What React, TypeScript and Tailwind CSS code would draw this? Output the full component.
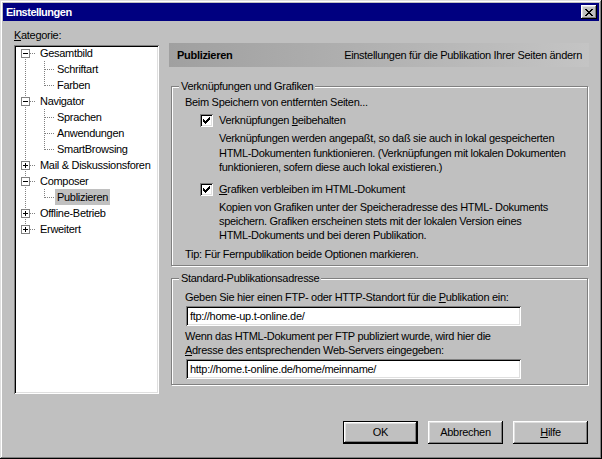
import React from "react";

const FONT = "font-['Liberation_Sans',Arial,sans-serif]";

// classic win98 bevels
const RAISED = "shadow-[inset_-1px_-1px_#000,inset_1px_1px_#fff,inset_-2px_-2px_#808080,inset_2px_2px_#dfdfdf]";
const SUNKEN = "shadow-[inset_1px_1px_#808080,inset_-1px_-1px_#fff,inset_2px_2px_#000,inset_-2px_-2px_#dfdfdf]";
const ETCHED = "border border-[#808080] shadow-[inset_1px_1px_#fff,1px_1px_#fff]";

type Node = { label: string; level: 0 | 1; box?: "plus" | "minus"; last?: boolean; selected?: boolean };

const TREE: Node[] = [
  { label: "Gesamtbild", level: 0, box: "minus" },
  { label: "Schriftart", level: 1 },
  { label: "Farben", level: 1, last: true },
  { label: "Navigator", level: 0, box: "minus" },
  { label: "Sprachen", level: 1 },
  { label: "Anwendungen", level: 1 },
  { label: "SmartBrowsing", level: 1, last: true },
  { label: "Mail & Diskussionsforen", level: 0, box: "plus" },
  { label: "Composer", level: 0, box: "minus" },
  { label: "Publizieren", level: 1, last: true, selected: true },
  { label: "Offline-Betrieb", level: 0, box: "plus" },
  { label: "Erweitert", level: 0, box: "plus", last: true },
];

function Gutter({ node, first }: { node: Node; first: boolean }) {
  const w = node.level === 0 ? 22 : 39;
  const dot = { stroke: "#808080", strokeDasharray: "1 1", shapeRendering: "crispEdges" as const };
  return (
    <svg width={w} height={16} className="shrink-0">
      {node.level === 0 ? (
        <>
          <line x1={9.5} x2={9.5} y1={first ? 8 : 0} y2={node.last ? 4 : 16} {...dot} />
          <line x1={14} x2={20} y1={8.5} y2={8.5} {...dot} />
          <rect x={5.5} y={4.5} width={8} height={8} fill="#fff" stroke="#808080" shapeRendering="crispEdges" />
          <line x1={7} x2={12} y1={8.5} y2={8.5} stroke="#000" shapeRendering="crispEdges" />
          {node.box === "plus" && <line x1={9.5} x2={9.5} y1={6} y2={11} stroke="#000" shapeRendering="crispEdges" />}
        </>
      ) : (
        <>
          <line x1={9.5} x2={9.5} y1={0} y2={16} {...dot} />
          <line x1={28.5} x2={28.5} y1={0} y2={node.last ? 9 : 16} {...dot} />
          <line x1={29} x2={38} y1={8.5} y2={8.5} {...dot} />
        </>
      )}
    </svg>
  );
}

function Check() {
  return (
    <span className={`w-[13px] h-[13px] bg-white shrink-0 flex items-center justify-center ${SUNKEN}`}>
      <svg width={7} height={7} viewBox="0 0 7 7">
        <path d="M0 2h1v1h1v1h1v-1h1v-1h1v-1h1v-1h1v3h-1v1h-1v1h-1v1h-1v1h-1v-1h-1v-1h-1v-1h-1z" fill="#000" />
      </svg>
    </span>
  );
}

function Button({ children, def }: { children: React.ReactNode; def?: boolean }) {
  return (
    <div
      className={`w-[75px] h-[23px] flex items-center justify-center text-black ${
        def
          ? "shadow-[inset_0_0_0_1px_#000,inset_-2px_-2px_#000,inset_2px_2px_#fff,inset_-3px_-3px_#808080,inset_3px_3px_#dfdfdf]"
          : RAISED
      }`}
    >
      {children}
    </div>
  );
}

export default function App() {
  return (
    <div className={`w-[602px] h-[459px] bg-[#c0c0c0] p-[3px] flex flex-col text-[11px] tracking-[-0.3px] leading-[13px] text-black ${FONT} shadow-[inset_-1px_-1px_#000,inset_1px_1px_#dfdfdf,inset_-2px_-2px_#808080,inset_2px_2px_#fff]`}>
      {/* title bar */}
      <div className="h-[18px] bg-[#000080] flex items-center justify-between pl-[3px] pr-[2px]">
        <span className="text-white font-bold text-[11px] tracking-[-0.5px]">Einstellungen</span>
        <div className={`w-[16px] h-[14px] bg-[#c0c0c0] flex items-center justify-center ${RAISED}`}>
          <svg width={8} height={7} viewBox="0 0 8 7">
            <path d="M0 0h2v1h1v1h2v-1h1v-1h2v1h-1v1h-1v1h-1v1h1v1h1v1h1v1h-2v-1h-1v-1h-2v1h-1v1h-2v-1h1v-1h1v-1h1v-1h-1v-1h-1v-1h-1z" fill="#000" />
          </svg>
        </div>
      </div>

      <div className="flex flex-1">
        {/* left: categories */}
        <div className="ml-[11px] mt-[8px] flex flex-col">
          <span>
            <u>K</u>ategorie:
          </span>
          <div className={`mt-[3px] w-[145px] h-[349px] bg-white px-[2px] ${SUNKEN}`}>
            <div className="flex flex-col">
              {TREE.map((n, i) => (
                <div key={n.label} className="h-[16px] flex items-center whitespace-nowrap">
                  <Gutter node={n} first={i === 0} />
                  <span className={`px-[2px] h-[16px] flex items-center ${n.selected ? "bg-[#c0c0c0]" : ""}`}>{n.label}</span>
                </div>
              ))}
            </div>
          </div>
        </div>

        {/* right: panel */}
        <div className="ml-[10px] mt-[22px] w-[420px] flex flex-col">
          <div className="h-[24px] bg-linear-to-r from-[#a0a0a0] to-[#c4c4c4] flex items-center justify-between pl-[8px] pr-[7px]">
            <span className="font-bold">Publizieren</span>
            <span>Einstellungen für die Publikation Ihrer Seiten ändern</span>
          </div>

          {/* group 1 */}
          <div className={`relative ml-[2px] mt-[19px] w-[417px] h-[180px] ${ETCHED}`}>
            <span className="absolute -top-[7px] left-[7px] bg-[#c0c0c0] px-[2px]">Verknüpfungen und Grafiken</span>
            <div className="pl-[13px] pt-[9px] flex flex-col">
              <span>Beim Speichern von entfernten Seiten...</span>
              <div className="mt-[5px] ml-[15px] flex items-center gap-[6px]">
                <Check />
                <span>
                  Verknüpfungen <u>b</u>eibehalten
                </span>
              </div>
              <p className="ml-[34px] mt-[4px] leading-[14.5px]">
                Verknüpfungen werden angepaßt, so daß sie auch in lokal gespeicherten
                <br />
                HTML-Dokumenten funktionieren. (Verknüpfungen mit lokalen Dokumenten
                <br />
                funktionieren, sofern diese auch lokal existieren.)
              </p>
              <div className="mt-[8px] ml-[15px] flex items-center gap-[6px]">
                <Check />
                <span>
                  <u>G</u>rafiken verbleiben im HTML-Dokument
                </span>
              </div>
              <p className="ml-[34px] mt-[4px] leading-[14px]">
                Kopien von Grafiken unter der Speicheradresse des HTML- Dokuments
                <br />
                speichern. Grafiken erscheinen stets mit der lokalen Version eines
                <br />
                HTML-Dokuments und bei deren Publikation.
              </p>
              <span className="mt-[6px]">Tip: Für Fernpublikation beide Optionen markieren.</span>
            </div>
          </div>

          {/* group 2 */}
          <div className={`relative ml-[2px] mt-[12px] w-[417px] h-[107px] ${ETCHED}`}>
            <span className="absolute -top-[7px] left-[7px] bg-[#c0c0c0] px-[2px]">Standard-Publikationsadresse</span>
            <div className="pl-[13px] pt-[12px] flex flex-col">
              <span>
                Geben Sie hier einen FTP- oder HTTP-Standort für die <u>P</u>ublikation ein:
              </span>
              <div className={`mt-[2px] ml-[1px] w-[335px] h-[20px] bg-white flex items-center pl-[4px] ${SUNKEN}`}>
                ftp://home-up.t-online.de/
              </div>
              <span className="mt-[3px] leading-[14px]">
                Wenn das HTML-Dokument per FTP publiziert wurde, wird hier die
                <br />
                <u>A</u>dresse des entsprechenden Web-Servers eingegeben:
              </span>
              <div className={`mt-[2px] ml-[1px] w-[335px] h-[20px] bg-white flex items-center pl-[4px] ${SUNKEN}`}>
                http://home.t-online.de/home/meinname/
              </div>
            </div>
          </div>

          <div className="mt-auto mb-[12px] flex justify-end gap-[10px] pr-[1px]">
            <Button def>OK</Button>
            <Button>Abbrechen</Button>
            <Button>
              <span>
                <u>H</u>ilfe
              </span>
            </Button>
          </div>
        </div>
      </div>
    </div>
  );
}
